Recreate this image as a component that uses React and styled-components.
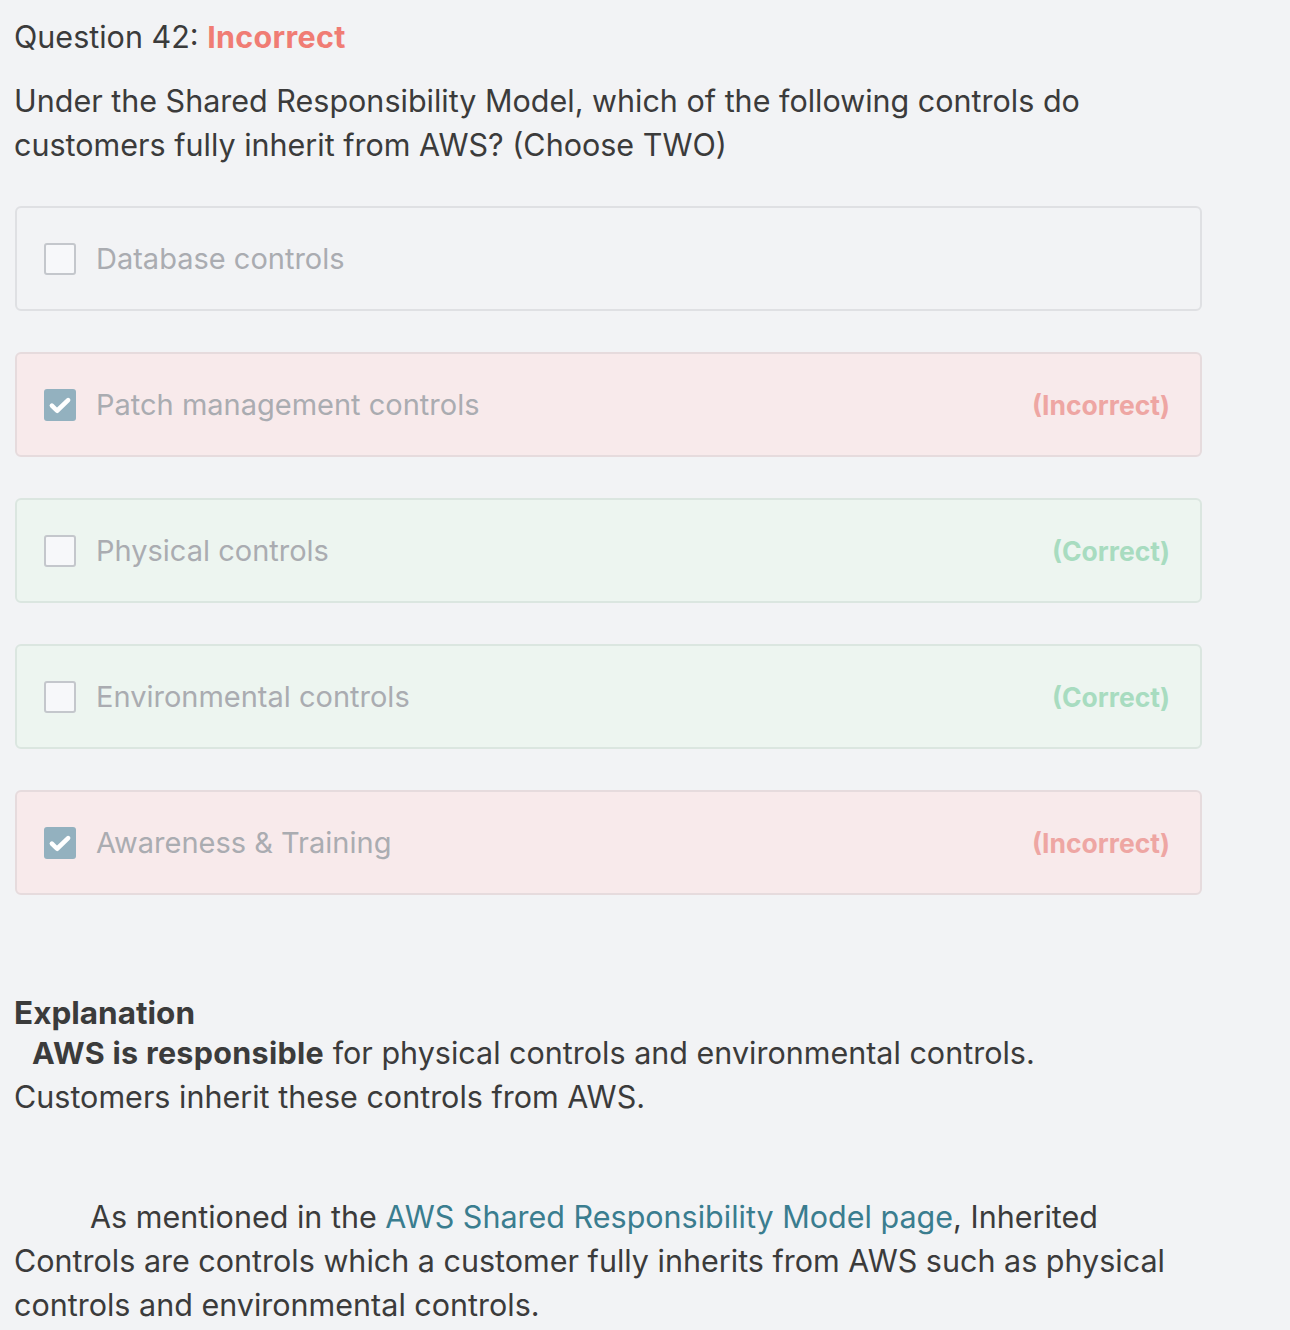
import React from 'react';
import styled, { createGlobalStyle, css } from 'styled-components';

const GlobalStyle = createGlobalStyle`
  html, body {
    margin: 0;
    padding: 0;
    background: #f2f3f5;
  }
  body {
    font-family: Inter, "Noto Sans", "Liberation Sans", sans-serif;
    color: #3b3b3b;
  }
`;

const Page = styled.div`
  width: 1290px;
  height: 1330px;
  overflow: hidden;
  box-sizing: border-box;
  padding: 15px 15px 0 14px;
`;

const Title = styled.div`
  font-size: 30.5px;
  line-height: 44px;
  color: #3b3b3b;
`;

const Status = styled.span`
  color: #f07c74;
  font-weight: 650;
  letter-spacing: 0.3px;
`;

const Prompt = styled.div`
  margin-top: 20px;
  font-size: 30.5px;
  line-height: 44px;
`;

const Options = styled.div`
  margin-top: 39px;
  margin-left: 1px;
  width: 1187px;
  display: flex;
  flex-direction: column;
  gap: 41px;
`;

const variants = {
  neutral: css`
    background: #f2f3f5;
    border-color: #dfe0e3;
  `,
  wrong: css`
    background: #f8eaeb;
    border-color: #e6dbdd;
  `,
  right: css`
    background: #edf5f0;
    border-color: #dbe6e0;
  `,
};

const Option = styled.div`
  box-sizing: border-box;
  height: 105px;
  border: 2px solid;
  border-radius: 6px;
  display: flex;
  align-items: center;
  padding: 0 30px 0 27px;
  ${(p) => variants[p.variant]}
`;

const Box = styled.span`
  box-sizing: border-box;
  width: 32px;
  height: 32px;
  border-radius: 3px;
  flex: 0 0 auto;
  display: flex;
  align-items: center;
  justify-content: center;
  ${(p) => (p.checked
    ? css`
      background: #93b1bf;
      border: none;
    `
    : css`
      background: #f7f8fa;
      border: 2px solid #c4c7cc;
    `)}
`;

const Label = styled.span`
  margin-left: 20px;
  flex: 1 1 auto;
  font-size: 29px;
  color: #aaacb1;
`;

const Verdict = styled.span`
  font-size: 26.5px;
  font-weight: 700;
  color: ${(p) => (p.ok ? '#a8dcc0' : '#eea6a3')};
`;

const Explanation = styled.div`
  margin-top: 100px;
  font-size: 30.5px;
  line-height: 44px;
`;

const Heading = styled.div`
  font-weight: 700;
  font-size: 31.5px;
  line-height: 36px;
`;

const Strong = styled.b`
  font-weight: 700;
  letter-spacing: 0.3px;
`;

const Para = styled.p`
  margin: 0;
  text-indent: ${(p) => p.indent || 0}px;
  & + & {
    margin-top: 76px;
  }
`;

const Link = styled.a`
  color: #3a7d8f;
  text-decoration: none;
`;

function Check() {
  return (
    <svg width="26" height="26" viewBox="0 0 24 24" fill="none">
      <path d="M4.5 12.5l4.8 4.8L19.5 7.5" stroke="#fff" strokeWidth="4.2" strokeLinecap="round" strokeLinejoin="round" />
    </svg>
  );
}

const answers = [
  { label: 'Database controls', variant: 'neutral', checked: false },
  { label: 'Patch management controls', variant: 'wrong', checked: true, verdict: '(Incorrect)' },
  { label: 'Physical controls', variant: 'right', checked: false, verdict: '(Correct)' },
  { label: 'Environmental controls', variant: 'right', checked: false, verdict: '(Correct)' },
  { label: 'Awareness & Training', variant: 'wrong', checked: true, verdict: '(Incorrect)' },
];

export default function App() {
  return (
    <>
      <GlobalStyle />
      <Page>
        <Title>
          Question 42: <Status>Incorrect</Status>
        </Title>
        <Prompt>
          Under the Shared Responsibility Model, which of the following controls do
          <br />
          customers fully inherit from AWS? (Choose TWO)
        </Prompt>
        <Options>
          {answers.map((a) => (
            <Option key={a.label} variant={a.variant}>
              <Box checked={a.checked}>{a.checked && <Check />}</Box>
              <Label>{a.label}</Label>
              {a.verdict && <Verdict ok={a.variant === 'right'}>{a.verdict}</Verdict>}
            </Option>
          ))}
        </Options>
        <Explanation>
          <Heading>Explanation</Heading>
          <Para indent={18}>
            <Strong>AWS is responsible</Strong> for physical controls and environmental controls.
            <br />
            Customers inherit these controls from AWS.
          </Para>
          <Para indent={76}>
            As mentioned in the <Link href="#">AWS Shared Responsibility Model page</Link>, Inherited
            <br />
            Controls are controls which a customer fully inherits from AWS such as physical
            <br />
            controls and environmental controls.
          </Para>
        </Explanation>
      </Page>
    </>
  );
}
